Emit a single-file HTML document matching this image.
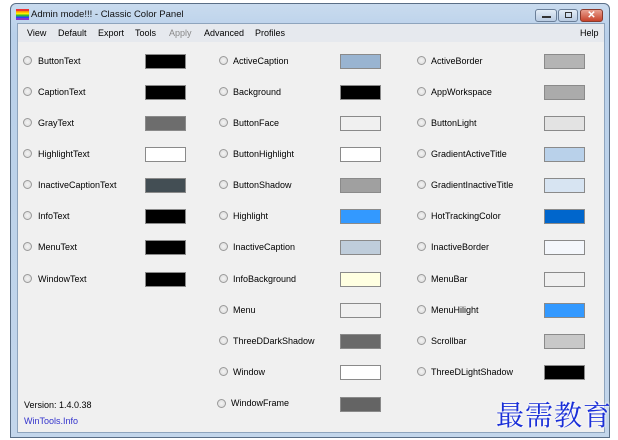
<!DOCTYPE html>
<html><head><meta charset="utf-8"><style>
*{margin:0;padding:0;box-sizing:border-box}
body{width:618px;height:440px;background:#fff;position:relative;overflow:hidden;font-family:"Liberation Sans",sans-serif;font-size:9px;color:#000}
.frame{position:absolute;left:10px;top:3px;width:600px;height:435px;border:1px solid #5a6e86;border-radius:6px 6px 0 0;background:linear-gradient(#c9dbee,#b9d0ea 30px,#c3d6eb)}
.client{position:absolute;left:17px;top:23px;width:588px;height:410px;background:#f0f0f0;border:1px solid #8ea4bd}
.menu{position:absolute;left:0;top:0;width:100%;height:18px;background:#e6e9ee}
.menu span{position:absolute;top:4px;font-size:9px}
.t{position:absolute;top:9px;left:31px;font-size:9.5px;color:#111}
.l{position:absolute;font-size:9px}
.r{position:absolute;width:9px;height:9px;border-radius:50%;border:1px solid #9a9a9a;background:radial-gradient(#f4f4f4,#d8d8d8)}
.s{position:absolute;width:41px;height:15px;border:1px solid #8a8a8a}
.btn{position:absolute;top:9px;height:13px;border:1px solid #6b7f99;border-radius:3px;background:linear-gradient(#e4edf7,#b9cbe2)}
</style></head><body>
<div class="frame"></div>
<div style="position:absolute;left:16px;top:9px;width:13px;height:11px;background:linear-gradient(#e33 0,#e33 17%,#f90 17%,#f90 34%,#fe0 34%,#fe0 50%,#3b3 50%,#3b3 67%,#24f 67%,#24f 84%,#83c 84%)"></div>
<div class="t">Admin mode!!! - Classic Color Panel</div>
<div class="btn" style="left:535px;width:22px"><div style="position:absolute;left:6px;top:6px;width:9px;height:2px;background:#333"></div></div>
<div class="btn" style="left:558px;width:20px"><div style="position:absolute;left:6px;top:2px;width:7px;height:6px;border:1px solid #333"></div></div>
<div class="btn" style="left:580px;width:23px;background:linear-gradient(#e8a090,#c7432b);border-color:#8a3a2c;color:#fff;font-size:10px;text-align:center;line-height:11px;font-weight:bold">✕</div>
<div class="client">
<div class="menu">
<span style="left:9px">View</span><span style="left:40px">Default</span><span style="left:80px">Export</span><span style="left:117px">Tools</span><span style="left:151px;color:#888">Apply</span><span style="left:186px">Advanced</span><span style="left:237px">Profiles</span><span style="left:562px">Help</span>
</div>
</div>

<div class="r" style="left:23px;top:56px"></div><div class="l" style="left:38px;top:56px">ButtonText</div><div class="s" style="left:145px;top:54px;background:#000"></div>
<div class="r" style="left:23px;top:87px"></div><div class="l" style="left:38px;top:87px">CaptionText</div><div class="s" style="left:145px;top:85px;background:#000"></div>
<div class="r" style="left:23px;top:118px"></div><div class="l" style="left:38px;top:118px">GrayText</div><div class="s" style="left:145px;top:116px;background:#6d6d6d"></div>
<div class="r" style="left:23px;top:149px"></div><div class="l" style="left:38px;top:149px">HighlightText</div><div class="s" style="left:145px;top:147px;background:#fff"></div>
<div class="r" style="left:23px;top:180px"></div><div class="l" style="left:38px;top:180px">InactiveCaptionText</div><div class="s" style="left:145px;top:178px;background:#434e54"></div>
<div class="r" style="left:23px;top:211px"></div><div class="l" style="left:38px;top:211px">InfoText</div><div class="s" style="left:145px;top:209px;background:#000"></div>
<div class="r" style="left:23px;top:242px"></div><div class="l" style="left:38px;top:242px">MenuText</div><div class="s" style="left:145px;top:240px;background:#000"></div>
<div class="r" style="left:23px;top:274px"></div><div class="l" style="left:38px;top:274px">WindowText</div><div class="s" style="left:145px;top:272px;background:#000"></div>

<div class="r" style="left:219px;top:56px"></div><div class="l" style="left:233px;top:56px">ActiveCaption</div><div class="s" style="left:340px;top:54px;background:#99b4d1"></div>
<div class="r" style="left:219px;top:87px"></div><div class="l" style="left:233px;top:87px">Background</div><div class="s" style="left:340px;top:85px;background:#000"></div>
<div class="r" style="left:219px;top:118px"></div><div class="l" style="left:233px;top:118px">ButtonFace</div><div class="s" style="left:340px;top:116px;background:#f0f0f0"></div>
<div class="r" style="left:219px;top:149px"></div><div class="l" style="left:233px;top:149px">ButtonHighlight</div><div class="s" style="left:340px;top:147px;background:#fff"></div>
<div class="r" style="left:219px;top:180px"></div><div class="l" style="left:233px;top:180px">ButtonShadow</div><div class="s" style="left:340px;top:178px;background:#a0a0a0"></div>
<div class="r" style="left:219px;top:211px"></div><div class="l" style="left:233px;top:211px">Highlight</div><div class="s" style="left:340px;top:209px;background:#3399ff"></div>
<div class="r" style="left:219px;top:242px"></div><div class="l" style="left:233px;top:242px">InactiveCaption</div><div class="s" style="left:340px;top:240px;background:#bfcddb"></div>
<div class="r" style="left:219px;top:274px"></div><div class="l" style="left:233px;top:274px">InfoBackground</div><div class="s" style="left:340px;top:272px;background:#ffffe1"></div>
<div class="r" style="left:219px;top:305px"></div><div class="l" style="left:233px;top:305px">Menu</div><div class="s" style="left:340px;top:303px;background:#f0f0f0"></div>
<div class="r" style="left:219px;top:336px"></div><div class="l" style="left:233px;top:336px">ThreeDDarkShadow</div><div class="s" style="left:340px;top:334px;background:#696969"></div>
<div class="r" style="left:219px;top:367px"></div><div class="l" style="left:233px;top:367px">Window</div><div class="s" style="left:340px;top:365px;background:#fff"></div>
<div class="r" style="left:217px;top:399px"></div><div class="l" style="left:231px;top:398px">WindowFrame</div><div class="s" style="left:340px;top:397px;background:#646464"></div>

<div class="r" style="left:417px;top:56px"></div><div class="l" style="left:431px;top:56px">ActiveBorder</div><div class="s" style="left:544px;top:54px;background:#b4b4b4"></div>
<div class="r" style="left:417px;top:87px"></div><div class="l" style="left:431px;top:87px">AppWorkspace</div><div class="s" style="left:544px;top:85px;background:#ababab"></div>
<div class="r" style="left:417px;top:118px"></div><div class="l" style="left:431px;top:118px">ButtonLight</div><div class="s" style="left:544px;top:116px;background:#e3e3e3"></div>
<div class="r" style="left:417px;top:149px"></div><div class="l" style="left:431px;top:149px">GradientActiveTitle</div><div class="s" style="left:544px;top:147px;background:#b9d1ea"></div>
<div class="r" style="left:417px;top:180px"></div><div class="l" style="left:431px;top:180px">GradientInactiveTitle</div><div class="s" style="left:544px;top:178px;background:#d7e4f2"></div>
<div class="r" style="left:417px;top:211px"></div><div class="l" style="left:431px;top:211px">HotTrackingColor</div><div class="s" style="left:544px;top:209px;background:#0066cc"></div>
<div class="r" style="left:417px;top:242px"></div><div class="l" style="left:431px;top:242px">InactiveBorder</div><div class="s" style="left:544px;top:240px;background:#f4f7fc"></div>
<div class="r" style="left:417px;top:274px"></div><div class="l" style="left:431px;top:274px">MenuBar</div><div class="s" style="left:544px;top:272px;background:#f0f0f0"></div>
<div class="r" style="left:417px;top:305px"></div><div class="l" style="left:431px;top:305px">MenuHilight</div><div class="s" style="left:544px;top:303px;background:#3399ff"></div>
<div class="r" style="left:417px;top:336px"></div><div class="l" style="left:431px;top:336px">Scrollbar</div><div class="s" style="left:544px;top:334px;background:#c8c8c8"></div>
<div class="r" style="left:417px;top:367px"></div><div class="l" style="left:431px;top:367px">ThreeDLightShadow</div><div class="s" style="left:544px;top:365px;background:#000"></div>

<div class="l" style="left:24px;top:400px">Version: 1.4.0.38</div>
<div class="l" style="left:24px;top:416px;color:#3333cc">WinTools.Info</div>
<div style="position:absolute;left:496px;top:394px;font-family:'Noto Serif CJK SC',serif;font-size:28px;color:#1a2fd8;letter-spacing:1px;text-shadow:0 0 2px #fff,0 0 3px #fff;white-space:nowrap">最需教育</div>
</body></html>
